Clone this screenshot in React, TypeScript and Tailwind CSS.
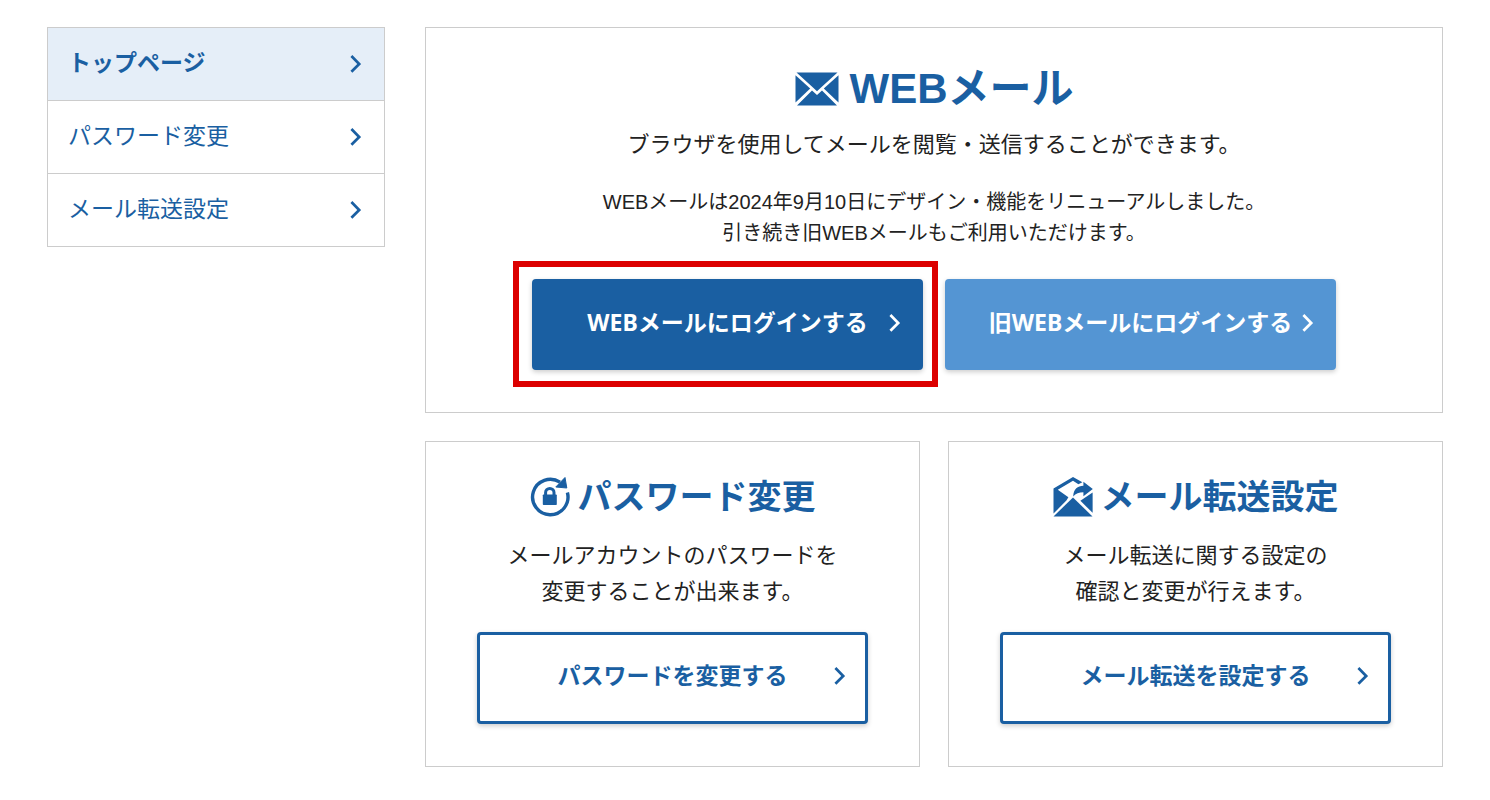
import clsx from "clsx"

const NAV_ITEMS = [
  { label: "トップページ", href: "#top", active: true },
  { label: "パスワード変更", href: "#password", active: false },
  { label: "メール転送設定", href: "#forward", active: false },
]

function Chevron() {
  return (
    <svg width="12" height="20" viewBox="0 0 12 20" fill="none" aria-hidden="true" className="shrink-0 justify-self-end">
      <path d="M1.4 3 9.2 11l-7.8 7.8" stroke="currentColor" strokeWidth="2.7" />
    </svg>
  )
}

function MailIcon() {
  return (
    <svg width="44" height="34" viewBox="0 0 44 34" fill="currentColor" aria-hidden="true">
      <path d="M1.5.5h41L26.3 15.2 22 19.2l-4.3-4z" />
      <path d="M.5 3.2 15.2 16.6.5 30.6z" />
      <path d="M43.5 3.2 28.8 16.6l14.7 14z" />
      <path d="M2 33.5 17 18.4l5 4.7 5-4.7 15 15.1z" />
    </svg>
  )
}

function PasswordIcon() {
  return (
    <svg width="40" height="40" viewBox="0 0 40 40" fill="none" aria-hidden="true">
      <path d="M30 5.2A17.7 17.7 0 1 0 37.4 15.5" stroke="currentColor" strokeWidth="3.4" />
      <path d="M35 .5 36.8 11l-11-1z" fill="currentColor" stroke="currentColor" strokeWidth="1" />
      <path d="M15.6 20v-4.4a4.2 4.2 0 0 1 8.4 0V20" stroke="currentColor" strokeWidth="3" />
      <rect x="12.8" y="17.4" width="14" height="10.6" rx="0.8" fill="currentColor" />
    </svg>
  )
}

function ForwardIcon() {
  return (
    <svg width="40" height="40" viewBox="0 0 40 40" fill="currentColor" aria-hidden="true">
      <path d="M20 0 .5 11.5v25L13.4 23.6l2-3.4L4.8 12.8 20 3.8l5.4 3.4 4-2z" />
      <path d="M39.8 12 30.4 4.8v4C24.6 9 20.6 12 20.2 19.4c2.6-3 5.8-4.2 10.2-4.2v4z" />
      <path d="M39.6 15.4v20.4L27.4 23.8z" />
      <path d="M.5 39.5 20 20.4l19.5 19.1z" />
    </svg>
  )
}

type LinkButtonProps = {
  href: string
  label: string
  variant: "primary" | "light" | "outline"
}

function LinkButton({ href, label, variant }: LinkButtonProps) {
  return (
    <a
      href={href}
      className={clsx(
        "grid w-[391px] max-w-full grid-cols-[1fr_auto_1fr] items-center rounded border-[3px] px-[19px] pb-1.5 font-['Noto_Sans','Noto_Sans_CJK_JP',sans-serif] text-[23px] leading-8 font-bold whitespace-nowrap shadow-[0_2px_5px_rgba(0,0,0,0.2)]",
        variant === "primary" && "h-[91px] border-[#1a5fa2] bg-[#1a5fa2] text-white",
        variant === "light" && "h-[91px] border-[#5495d3] bg-[#5495d3] text-white",
        variant === "outline" && "h-[92px] border-[#1a5fa2] bg-white text-[#1a5fa2]",
      )}
    >
      <span className="col-start-2">{label}</span>
      <Chevron />
    </a>
  )
}

export default function App() {
  return (
    <div className="grid grid-cols-[338fr_1018fr] items-start gap-10 bg-white px-[47px] py-[27px] font-['Liberation_Sans','Noto_Sans_CJK_JP',sans-serif] text-[#222222]">
      {/* サイドメニュー */}
      <nav className="border border-[#cccccc]">
        <ul className="divide-y divide-[#cccccc]">
          {NAV_ITEMS.map((item) => (
            <li key={item.href}>
              <a
                href={item.href}
                className={clsx(
                  "flex h-[72px] items-center justify-between pr-[22px] pb-[3px] pl-5 text-[23px] leading-8 text-[#1a5fa2]",
                  item.active && "bg-[#e5eef8] font-bold",
                )}
              >
                {item.label}
                <Chevron />
              </a>
            </li>
          ))}
        </ul>
      </nav>

      <main className="flex flex-col gap-7">
        {/* WEBメール */}
        <section className="flex flex-col items-center border border-[#cccccc] pt-[31px] pb-[42px] text-center">
          <h1 className="flex items-center gap-[11px] text-[42px] leading-[60px] font-bold text-[#1a5fa2]">
            <MailIcon />
            WEBメール
          </h1>
          <p className="mt-2 text-[22px] leading-9">ブラウザを使用してメールを閲覧・送信することができます。</p>
          <p className="mt-6 text-[20px] leading-[31px]">
            WEBメールは2024年9月10日にデザイン・機能をリニューアルしました。
            <br />
            引き続き旧WEBメールもご利用いただけます。
          </p>
          <div className="mt-[30px] flex justify-center gap-[22px]">
            <div className="relative">
              <LinkButton href="#webmail" label="WEBメールにログインする" variant="primary" />
              {/* 強調枠 */}
              <div className="pointer-events-none absolute -top-[18px] -right-[15px] -bottom-[17px] -left-[19px] border-[6px] border-[#dc0000]" />
            </div>
            <LinkButton href="#old-webmail" label="旧WEBメールにログインする" variant="light" />
          </div>
        </section>

        <div className="grid grid-cols-2 gap-7">
          {/* パスワード変更 */}
          <section className="flex flex-col items-center border border-[#cccccc] pt-8 pb-[42px] text-center">
            <h2 className="flex items-center gap-2 text-[34px] leading-[46px] font-bold text-[#1a5fa2]">
              <PasswordIcon />
              パスワード変更
            </h2>
            <p className="mt-[18px] text-[22px] leading-9">
              メールアカウントのパスワードを
              <br />
              変更することが出来ます。
            </p>
            <div className="mt-[22px]">
              <LinkButton href="#password" label="パスワードを変更する" variant="outline" />
            </div>
          </section>

          {/* メール転送設定 */}
          <section className="flex flex-col items-center border border-[#cccccc] pt-8 pb-[42px] text-center">
            <h2 className="flex items-center gap-2 text-[34px] leading-[46px] font-bold text-[#1a5fa2]">
              <ForwardIcon />
              メール転送設定
            </h2>
            <p className="mt-[18px] text-[22px] leading-9">
              メール転送に関する設定の
              <br />
              確認と変更が行えます。
            </p>
            <div className="mt-[22px]">
              <LinkButton href="#forward" label="メール転送を設定する" variant="outline" />
            </div>
          </section>
        </div>
      </main>
    </div>
  )
}
